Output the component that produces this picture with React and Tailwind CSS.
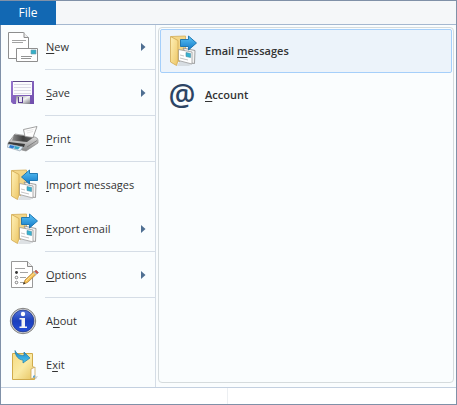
import React, { useState } from 'react';

function NewIcon() {
  return (
    <svg viewBox="0 0 32 32" className="size-8 shrink-0" aria-hidden="true">
      <path d="M1.5 1.5h15l5 5v21h-20z" fill="#fff" stroke="#8e8e8e" />
      <path d="M17 1.5v5h4.5" fill="#eee" stroke="#8e8e8e" />
      <path d="M5 9.5h14M5 11.5h11" stroke="#999" strokeWidth="0.9" />
      <path d="M9.5 17.5h21v13h-21z" fill="#fff" stroke="#8e8e8e" />
      <path d="M24 19h5v4h-5z" fill="#35b0c8" stroke="#6d9cab" strokeWidth="0.6" />
      <path d="M14 25.5h11M14 27.5h10" stroke="#888" strokeWidth="0.9" />
    </svg>
  );
}

function SaveIcon() {
  return (
    <svg viewBox="0 0 32 32" className="size-8 shrink-0" aria-hidden="true">
      <defs>
        <linearGradient id="disk" x1="0" y1="0" x2="1" y2="1">
          <stop offset="0" stopColor="#9775cf" />
          <stop offset="1" stopColor="#6f4dab" />
        </linearGradient>
        <linearGradient id="shutter" x1="0" y1="0" x2="1" y2="1">
          <stop offset="0" stopColor="#8b8b95" />
          <stop offset="0.5" stopColor="#f2f2f4" />
          <stop offset="1" stopColor="#77777f" />
        </linearGradient>
      </defs>
      <path d="M4 4h23v23H6l-2-2z" fill="url(#disk)" />
      <path d="M6 4h19v14H6z" fill="#fbfbfd" />
      <path d="M6 4.5h19" stroke="#5e4a86" />
      <path d="M7 7.5h17M7 10.5h17M7 13.5h17M7 16.5h17" stroke="#d3d0de" strokeWidth="0.8" />
      <path d="M9 19h14v8H9z" fill="url(#shutter)" />
      <path d="M11 20h5v6h-5z" fill="#5b3f91" />
      <path d="M12 20h3v5h-3z" fill="#e9e6f2" />
    </svg>
  );
}

function PrintIcon() {
  return (
    <svg viewBox="0 0 32 32" className="size-8 shrink-0" aria-hidden="true">
      <defs>
        <linearGradient id="printer" x1="0" y1="0" x2="1" y2="0">
          <stop offset="0" stopColor="#8c8c8c" />
          <stop offset="0.5" stopColor="#3f3f3f" />
          <stop offset="1" stopColor="#666" />
        </linearGradient>
        <linearGradient id="side" x1="0" y1="0" x2="0" y2="1">
          <stop offset="0" stopColor="#ededed" />
          <stop offset="1" stopColor="#858585" />
        </linearGradient>
      </defs>
      <path d="M1 20l7-9 20 3q3 1 3 3v3l-12 8-4-1L1 22z" fill="url(#side)" stroke="#8a8a8a" strokeWidth="0.7" />
      <path d="M7 11.500L27 14l-7 5-15-1.500z" fill="url(#printer)" />
      <path d="M16.500 6.500L30 3.500l-4 11-8-1z" fill="#fdfdfd" stroke="#8a8a8a" strokeWidth="0.8" />
      <path d="M19.500 8l7-1.500M20 10l6-1.500" stroke="#ddd" strokeWidth="0.7" />
      <path d="M2 19l16 2-1 3-16-3z" fill="#3a3a3a" />
      <path d="M1.500 21l14.500 3-3 4-13-4z" fill="#e2effa" stroke="#8496a3" strokeWidth="0.6" />
      <path d="M3 22l5 1-2 2.500-4-1z" fill="#2c79d2" />
      <path d="M8 23l5 1-2 2.500-4-1z" fill="#37a5c4" />
      <path d="M20 24l10-6.500" stroke="#6c6c6c" strokeWidth="0.7" />
    </svg>
  );
}

function MailFolderIcon({ incoming }) {
  return (
    <svg viewBox="0 0 32 32" className="size-8 shrink-0" aria-hidden="true">
      <defs>
        <linearGradient id="folder" x1="0" y1="0" x2="1" y2="1">
          <stop offset="0" stopColor="#fff1b8" />
          <stop offset="1" stopColor="#edc665" />
        </linearGradient>
        <linearGradient id="arrow" x1="0" y1="0" x2="0" y2="1">
          <stop offset="0" stopColor="#5cc4f6" />
          <stop offset="1" stopColor="#1279c8" />
        </linearGradient>
      </defs>
      <path d="M11 31l3-5 12 3-3 2z" fill="#c9cfd2" opacity="0.6" />
      <path d="M5 1.500L19.500 1v16L13 27z" fill="#f3d688" stroke="#d3ac55" strokeWidth="0.8" />
      <path d="M17 13l12 2.500-.500 13L25 28z" fill="#f3f3f3" stroke="#8a8a8a" strokeWidth="0.8" />
      <path d="M12.500 14.500L26 17v12l-13.500-3.500z" fill="#fff" stroke="#999" strokeWidth="0.8" />
      <path d="M20 17.500l4.500 1v4l-4.500-1z" fill="#35b2d1" stroke="#4a8ca0" strokeWidth="0.6" />
      <path d="M14 20l4 1M14 23l8 2" stroke="#b5b5b5" strokeWidth="0.8" />
      <path d="M4.500 1.500l7.500 4v20l-1.500 5-6-3.500z" fill="url(#folder)" stroke="#d0a850" strokeWidth="0.8" />
      {incoming ? (
        <path d="M14.500 8l8-7v3.500h8v7h-8V15z" fill="url(#arrow)" stroke="#1571ad" strokeWidth="0.9" />
      ) : (
        <path d="M14.500 4.500h8V1l8 7-8 7v-3.500h-8z" fill="url(#arrow)" stroke="#1571ad" strokeWidth="0.9" />
      )}
    </svg>
  );
}

function OptionsIcon() {
  return (
    <svg viewBox="0 0 32 32" className="size-8 shrink-0" aria-hidden="true">
      <path d="M4.5 2.5h16l5 5v21h-21z" fill="#fff" stroke="#999" />
      <path d="M20.5 2.5v5h5" fill="#eee" stroke="#888" />
      <path d="M8 9.5h10M13 13.5h8M13 18.5h6M13 23.5h5" stroke="#999" strokeWidth="0.9" />
      <circle cx="9.5" cy="13.5" r="1.4" fill="#333" />
      <circle cx="9.5" cy="18.5" r="1.3" fill="#fff" stroke="#666" strokeWidth="0.8" />
      <circle cx="9.5" cy="23.5" r="1.3" fill="#fff" stroke="#666" strokeWidth="0.8" />
      <path d="M16.500 25l1.500-4 9-8.500 2.500 2.500-9 8.500z" fill="#f4bd50" stroke="#a9782f" strokeWidth="0.7" />
      <path d="M19 22l9-8.500" stroke="#ffe39a" />
      <path d="M27.500 12.500l1.500-1.500 2.500 2.500-1.500 1.500z" fill="#d0554b" stroke="#8a5c58" strokeWidth="0.5" />
      <path d="M26.500 13.500l1-1 2.500 2.500-1 1z" fill="#b8c3cb" />
      <path d="M16 25.500l1-2.500 1.500 1.500z" fill="#333" />
    </svg>
  );
}

function AboutIcon() {
  return (
    <svg viewBox="0 0 32 32" className="size-8 shrink-0" aria-hidden="true">
      <defs>
        <linearGradient id="info" x1="0" y1="0" x2="0" y2="1">
          <stop offset="0" stopColor="#5375d9" />
          <stop offset="0.5" stopColor="#1b3fbd" />
          <stop offset="1" stopColor="#2550d8" />
        </linearGradient>
      </defs>
      <circle cx="16" cy="16" r="12.7" fill="#d5d5d5" stroke="#777" strokeWidth="0.9" />
      <circle cx="16" cy="16" r="10.9" fill="url(#info)" stroke="#243a89" strokeWidth="0.8" />
      <circle cx="16" cy="9" r="2.2" fill="#fff" />
      <path d="M12.5 13H18v8.500h2V23h-7.500v-1.500h2v-7h-2z" fill="#f3f3f3" />
    </svg>
  );
}

function ExitIcon() {
  return (
    <svg viewBox="0 0 32 32" className="size-8 shrink-0" aria-hidden="true">
      <defs>
        <linearGradient id="exit-folder" x1="0" y1="0" x2="1" y2="1">
          <stop offset="0" stopColor="#f5db82" />
          <stop offset="0.5" stopColor="#faeaa5" />
          <stop offset="1" stopColor="#e6c35e" />
        </linearGradient>
        <linearGradient id="exit-arrow" x1="0" y1="0" x2="0" y2="1">
          <stop offset="0" stopColor="#1b84c4" />
          <stop offset="1" stopColor="#4ec8f2" />
        </linearGradient>
      </defs>
      <path d="M24 29l7-2-2 3-5 1z" fill="#c6cccf" />
      <path d="M5.5 4.5h20v13l2 1v12h-22z" fill="url(#exit-folder)" stroke="#d0ab4c" />
      <path d="M24 20l4-2v10l-4 2z" fill="#fdfdfd" stroke="#c9a557" strokeWidth="0.8" />
      <path d="M26 27l2-1v2l-2 1z" fill="#65a8d0" />
      <path d="M8 1.500c2 4 5 5 9 5V3l6 6-7 5v-3C12 11 8 7 8 1.500z" fill="url(#exit-arrow)" stroke="#237da7" strokeWidth="0.7" />
    </svg>
  );
}

function AtIcon() {
  return (
    <span aria-hidden="true" className="flex size-8 shrink-0 items-center justify-center font-['Noto_Sans'] text-[30px] leading-8 font-medium text-[#2c4464]">
      @
    </span>
  );
}

// `hotkey` is the position of the underlined letter in the label
const menuItems = [
  { label: 'New', hotkey: 0, icon: <NewIcon />, submenu: true, divider: true },
  { label: 'Save', hotkey: 0, icon: <SaveIcon />, submenu: true, divider: true },
  { label: 'Print', hotkey: 0, icon: <PrintIcon />, divider: true },
  { label: 'Import messages', hotkey: 0, icon: <MailFolderIcon incoming /> },
  { label: 'Export email', hotkey: 0, icon: <MailFolderIcon />, submenu: true, divider: true },
  { label: 'Options', hotkey: 0, icon: <OptionsIcon />, submenu: true, divider: true },
  { label: 'About', hotkey: 1, icon: <AboutIcon /> },
  { label: 'Exit', hotkey: 1, icon: <ExitIcon /> },
];

const exportItems = [
  { label: 'Email messages', hotkey: 6, icon: <MailFolderIcon /> },
  { label: 'Account', hotkey: 0, icon: <AtIcon /> },
];

function Label({ text, hotkey }) {
  return (
    <span className="whitespace-nowrap">
      {text.slice(0, hotkey)}
      <u className="decoration-1 underline-offset-2">{text[hotkey]}</u>
      {text.slice(hotkey + 1)}
    </span>
  );
}

export default function App() {
  const [selected, setSelected] = useState('Email messages');

  return (
    <div className="border border-[#8091a8] bg-white font-['Open_Sans','Noto_Sans',sans-serif] text-[11px] text-[#333]">
      <header className="flex h-6 border-b border-[#a5b8d0] bg-[#f5f7f9]">
        <button className="-mb-px -ml-px h-6 w-14 bg-[#1268b3] text-xs text-white">File</button>
      </header>

      <main className="flex border-b border-[#c3d0e0] bg-[#fafdfe]">
        <nav className="w-[155px] shrink-0 border-r border-[#d5dde6]">
          {menuItems.map((item) => (
            <React.Fragment key={item.label}>
              <button className="flex h-11 w-full items-center gap-[7px] pr-2 pl-1.5 text-left">
                {item.icon}
                <Label text={item.label} hotkey={item.hotkey} />
                {item.submenu && (
                  <svg viewBox="0 0 6 8" className="ml-auto h-2 w-1.5" aria-hidden="true">
                    <path d="M0 0l4.5 4L0 8z" fill="#4f6f92" />
                  </svg>
                )}
              </button>
              {item.divider && <hr className="mb-px ml-11 border-[#d5dde6]" />}
            </React.Fragment>
          ))}
        </nav>

        <section className="mt-0.5 mr-0.5 mb-1 ml-0.5 flex-1 rounded-sm border border-[#d5dbdd] p-px">
          {exportItems.map((item) => (
            <button
              key={item.label}
              onClick={() => setSelected(item.label)}
              className={`flex h-11 w-full items-center gap-[7px] border pl-[5px] text-left font-semibold ${
                selected === item.label ? 'rounded-xs border-[#a5cffa] bg-[#ecf3fa]' : 'border-transparent'
              }`}
            >
              {item.icon}
              <Label text={item.label} hotkey={item.hotkey} />
            </button>
          ))}
        </section>
      </main>

      <footer className="flex h-4">
        <div className="w-[227px] border-r border-[#eceff2]" />
      </footer>
    </div>
  );
}
